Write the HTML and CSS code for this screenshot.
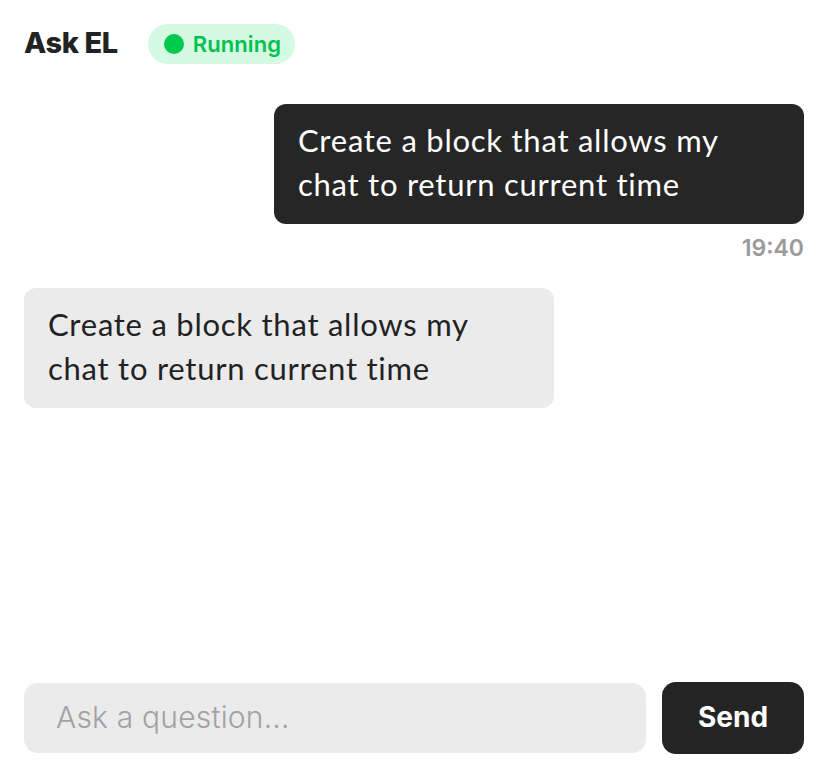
FILE: index.html
```html
<!DOCTYPE html>
<html lang="en">
<head>
<meta charset="utf-8">
<title>Ask EL</title>
<link rel="stylesheet" href="styles.css">
</head>
<body>
<div class="app">
  <header class="header">
    <h1 class="title">Ask EL</h1>
    <span class="badge"><span class="dot"></span>Running</span>
  </header>
  <main class="messages">
    <div class="msg msg-user">
      <div class="bubble bubble-dark">Create a block that allows my chat to return current time</div>
      <div class="time">19:40</div>
    </div>
    <div class="msg msg-bot">
      <div class="bubble bubble-light">Create a block that allows my chat to return current time</div>
    </div>
  </main>
  <form class="composer">
    <input class="input" type="text" placeholder="Ask a question...">
    <button class="send" type="button">Send</button>
  </form>
</div>
</body>
</html>
```
FILE: styles.css
```css
* { box-sizing: border-box; }
html, body { margin: 0; padding: 0; background: #fff; }
body { font-family: Lato, "Noto Sans", sans-serif; color: #222; }
.app {
  height: 778px;
  display: flex;
  flex-direction: column;
  padding: 24px 24px 24px 24px;
}
.header {
  display: flex;
  align-items: center;
  gap: 30px;
  height: 40px;
}
.title {
  margin: 0;
  font-family: Inter, sans-serif;
  font-weight: 800;
  font-size: 29px;
  letter-spacing: -0.4px;
  color: #222;
  line-height: 1;
  margin-top: -4px;
}
.badge {
  display: inline-flex;
  align-items: center;
  gap: 9px;
  height: 40px;
  padding: 0 14px 0 16px;
  border-radius: 20px;
  background: #d4fae3;
  color: #00c24e;
  font-family: Inter, sans-serif;
  font-weight: 600;
  font-size: 22px;
  letter-spacing: 0.1px;
}
.dot {
  width: 20px;
  height: 20px;
  border-radius: 50%;
  background: #00c94f;
}
.messages {
  flex: 1;
  display: flex;
  flex-direction: column;
  padding-top: 40px;
  gap: 26px;
}
.msg { display: flex; flex-direction: column; }
.msg-user { align-items: flex-end; }
.msg-bot { align-items: flex-start; }
.bubble {
  width: 530px;
  padding: 14px 24px 18px;
  border-radius: 12px;
  font-size: 31px;
  letter-spacing: 0.75px;
  line-height: 44px;
  font-weight: 400;
}
.bubble-dark { background: #262626; color: #fff; }
.bubble-light { background: #ebebeb; color: #222; }
.time {
  margin-top: 10px;
  font-family: Inter, sans-serif;
  font-weight: 600;
  font-size: 23px;
  line-height: 28px;
  color: #9a9a9a;
}
.composer {
  display: flex;
  gap: 16px;
  margin: 0;
}
.input {
  flex: 1;
  height: 70px;
  margin-top: 1px;
  border: none;
  outline: none;
  border-radius: 14px;
  background: #ebebeb;
  padding: 0 32px 2px;
  font-family: Inter, sans-serif;
  font-size: 30px;
  letter-spacing: 0.2px;
  font-weight: 300;
  color: #222;
}
.input::placeholder { color: #a2a2a2; }
.send {
  width: 142px;
  height: 72px;
  border: none;
  border-radius: 14px;
  background: #242424;
  color: #fff;
  font-family: Inter, sans-serif;
  font-weight: 700;
  font-size: 28px;
  padding: 0 0 3px;
}
```
